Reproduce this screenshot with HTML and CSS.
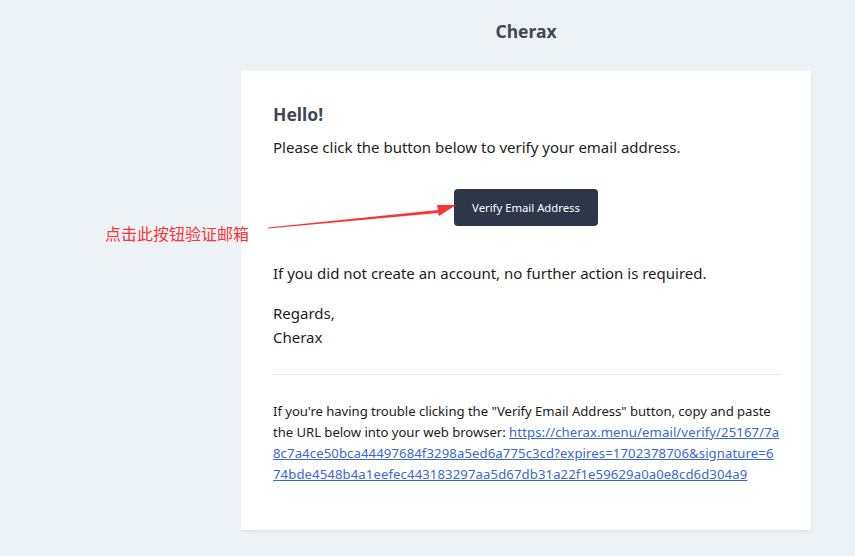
FILE: index.html
```html
<!DOCTYPE html>
<html lang="en">
<head>
<meta charset="utf-8">
<title>Cherax</title>
<link rel="stylesheet" href="styles.css">
</head>
<body>
<div class="wrapper">
  <header class="header">Cherax</header>
  <main class="card">
    <h1 class="hello">Hello!</h1>
    <p class="text">Please click the button below to verify your email address.</p>
    <div class="action">
      <a class="button" href="#">Verify Email Address</a>
    </div>
    <p class="text">If you did not create an account, no further action is required.</p>
    <p class="text">Regards,<br>Cherax</p>
    <div class="subcopy">
      <p>If you're having trouble clicking the "Verify Email Address" button, copy and paste the URL below into your web browser: <a class="link" href="#">https://cherax.menu/email/verify/25167/7a8c7a4ce50bca44497684f3298a5ed6a775c3cd?expires=1702378706&amp;signature=674bde4548b4a1eefec443183297aa5d67db31a22f1e59629a0a0e8cd6d304a9</a></p>
    </div>
  </main>
</div>
<div class="note">
  <span class="note-label">点击此按钮验证邮箱</span>
  <svg class="note-arrow" width="200" height="30" viewBox="0 0 200 30">
    <polygon points="0,25.5 170,8 169,3 188,3 171,14 170,11 0,26.5" fill="#fa3434"/>
  </svg>
</div>
</body>
</html>
```
FILE: styles.css
```css
html, body {
  margin: 0;
  padding: 0;
}
body {
  background: #edf2f7;
  font-family: "Segoe UI", "Noto Sans", "Open Sans", sans-serif;
  color: #1c1c1c;
  height: 556px;
  overflow: hidden;
  position: relative;
}
.wrapper {
  display: flex;
  flex-direction: column;
  align-items: flex-start;
  padding-left: 241px;
}
.header {
  width: 570px;
  height: 71px;
  display: flex;
  align-items: center;
  justify-content: center;
  font-size: 17.5px;
  font-weight: 700;
  color: #3d4852;
  box-sizing: border-box;
  padding-bottom: 10px;
}
.card {
  width: 570px;
  box-sizing: border-box;
  background: #fff;
  border-radius: 2px;
  padding: 30px 32px 45px;
  box-shadow: 0 2px 0 rgba(0, 0, 150, 0.025), 2px 4px 0 rgba(0, 0, 150, 0.015);
}
.hello {
  margin: 0 0 8px;
  font-size: 17.5px;
  font-weight: 700;
  color: #3d4852;
  line-height: 26px;
}
.text {
  margin: 0 0 16px;
  font-size: 15px;
  line-height: 24px;
}
.action {
  display: flex;
  justify-content: center;
  margin: 30px 0 35px;
}
.button {
  display: block;
  background: #2d3748;
  color: #fff;
  text-decoration: none;
  border-radius: 4px;
  font-size: 11.3px;
  line-height: 17px;
  padding: 10px 18px;
}
.subcopy {
  border-top: 1px solid #e8e5ef;
  margin-top: 25px;
  margin-right: -1.5px;
  padding-top: 26px;
}
.subcopy p {
  margin: 0;
  font-size: 13.15px;
  line-height: 21px;
  letter-spacing: -0.05px;
}
.link {
  color: #3869d4;
  word-break: break-all;
  letter-spacing: 0.1px;
}
.note {
  position: absolute;
  left: 0;
  top: 0;
}
.note-label {
  position: absolute;
  left: 105px;
  top: 222px;
  white-space: nowrap;
  font-family: "Noto Sans CJK SC", sans-serif;
  font-size: 16px;
  line-height: 22px;
  color: #fa3434;
}
.note-arrow {
  position: absolute;
  left: 268px;
  top: 202px;
}
```
